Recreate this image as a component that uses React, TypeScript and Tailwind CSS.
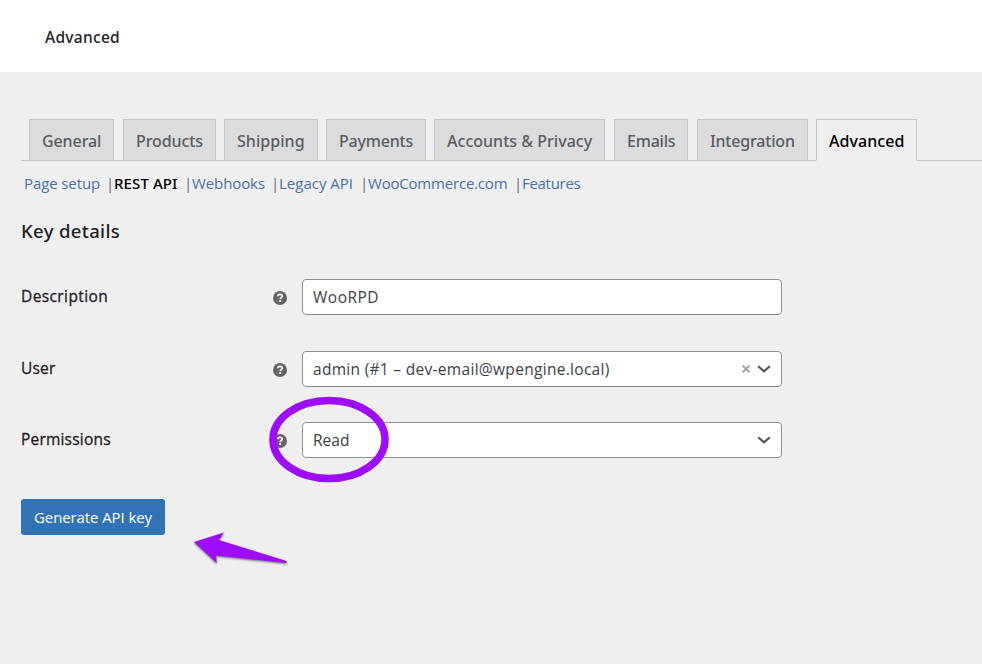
import React from 'react';

const tabs = [
  { label: 'General', box: 'w-[85px] mr-[9px]', text: 'tracking-[-0.1px]' },
  { label: 'Products', box: 'w-[93px] mr-[8px]', text: 'tracking-[-0.1px]' },
  { label: 'Shipping', box: 'w-[94px] mr-[8px]', text: 'tracking-[0.05px]' },
  { label: 'Payments', box: 'w-[100px] mr-[8px]', text: 'tracking-[-0.2px]' },
  { label: 'Accounts & Privacy', box: 'w-[171px] mr-[9px]', text: 'tracking-[0.02px]' },
  { label: 'Emails', box: 'w-[74px] mr-[9px]', text: 'tracking-[-0.2px]' },
  { label: 'Integration', box: 'w-[111px] mr-[8px]', text: 'tracking-[-0.18px]' },
  { label: 'Advanced', box: 'w-[101px]', text: 'tracking-[0.05px]', active: true },
];

const sections = [
  { label: 'Page setup', box: 'w-[82px]', text: 'tracking-[-0.1px]' },
  { label: 'REST API', box: 'w-[70px]', text: 'tracking-[0.1px]', active: true },
  { label: 'Webhooks', box: 'w-[79px]', text: 'tracking-[-0.1px]' },
  { label: 'Legacy API', box: 'w-[81px]', text: 'tracking-[0px]' },
  { label: 'WooCommerce.com', box: 'w-[146px]', text: 'tracking-[-0.2px]' },
  { label: 'Features', box: 'w-[60px]', text: 'tracking-[-0.3px]' },
];

function Help() {
  return (
    <svg className="h-[14px] w-[14px] shrink-0" viewBox="0 0 14 14" fill="none">
      <circle cx="7" cy="7" r="7" fill="#646467" />
      <path d="M4.9 5.3C4.9 4 5.8 3.4 7 3.4s2.2.7 2.2 1.8c0 1.5-2 1.5-2 3.1" stroke="#f4f4f4" strokeWidth="1.7" />
      <path d="M6.2 9.2h1.9V11H6.2z" fill="#f4f4f4" />
    </svg>
  );
}

function Chevron() {
  return (
    <svg className="mb-px h-[8px] w-[14px] shrink-0" viewBox="0 0 14 8" fill="none">
      <path d="M1.2 1.2L7 6.4l5.8-5.2" stroke="#505256" strokeWidth="2.1" />
    </svg>
  );
}

function Row({ label, track, children }: { label: string; track: string; children: React.ReactNode }) {
  return (
    <div className="flex h-9 items-center">
      <div className={`w-[252px] shrink-0 pb-[2px] text-[15.5px] leading-6 text-[#1f2125] [-webkit-text-stroke:0.3px_#1f2125] ${track}`}>{label}</div>
      <div className="mt-[2px]">
        <Help />
      </div>
      <div className="ml-[15px] flex h-9 w-[480px] items-center rounded-[4px] border border-[#8c8f94] bg-white pl-[10px] pr-[10px] pt-px text-[15.5px] text-[#3c4046]">
        {children}
      </div>
    </div>
  );
}

export default function App() {
  return (
    <div className="relative h-[664px] w-[982px] overflow-hidden whitespace-nowrap bg-[#efefef] font-['Open_Sans','Noto_Sans',sans-serif]">
      <header className="flex h-[72px] items-center bg-white pl-[45px] pt-[2px]">
        <h1 className="font-['Noto_Sans'] text-[15.5px] font-medium leading-6 tracking-[0.3px] text-[#1d2025]">Advanced</h1>
      </header>

      <nav className="ml-[21px] mt-[47px] flex h-[42px] border-b border-[#c3c4c7] pl-[8px]">
        {tabs.map((t) => (
          <div
            key={t.label}
            className={`flex h-[42px] shrink-0 border border-[#c3c4c7] pl-[12px] pt-[9px] font-['Noto_Sans'] text-[16px] font-medium leading-6 ${t.box} ${
              t.active ? 'border-b-[#efefef] bg-[#efefef] text-black' : 'bg-[#dcdcde] text-[#595c61]'
            }`}
          >
            <span className={t.text}>{t.label}</span>
          </div>
        ))}
      </nav>

      <ul className="ml-[24px] mt-[10px] flex h-6 text-[15px] leading-6">
        {sections.map((s, i) => (
          <li key={s.label} className="flex">
            <span className={`${s.box} ${s.text} ${s.active ? "font-['Noto_Sans'] font-medium text-black" : 'text-[#4a72a8]'}`}>{s.label}</span>
            {i < sections.length - 1 && <span className="w-[8px] text-[#646970]">|</span>}
          </li>
        ))}
      </ul>

      <main className="pl-[21px] pt-[24px]">
        <h2 className="font-['Noto_Sans'] text-[18.5px] font-medium leading-6 tracking-[0.35px] text-[#1f2125]">Key details</h2>

        <div className="mt-[36px]">
          <Row label="Description" track="tracking-[0.4px]">
            <span className="tracking-[0.5px]">WooRPD</span>
          </Row>
          <div className="h-9" />
          <Row label="User" track="tracking-[0.2px]">
            <span className="grow tracking-[0.3px]">admin (#1 – dev-email@wpengine.local)</span>
            <svg className="mb-px mr-[7px] h-[8px] w-[8px]" viewBox="0 0 8 8" fill="none">
              <path d="M.6.6l6.8 6.8M7.4.6L.6 7.4" stroke="#999" strokeWidth="1.7" />
            </svg>
            <Chevron />
          </Row>
          <div className="h-[35px]" />
          <Row label="Permissions" track="tracking-[0.2px]">
            <span className="grow tracking-[0px]">Read</span>
            <Chevron />
          </Row>
        </div>

        <button className="mt-[41px] block h-9 w-[144px] rounded-[3px] bg-[#3273b5] pl-[13px] text-left text-[15px] leading-9 tracking-[-0.1px] text-white">
          Generate API key
        </button>
      </main>

      <svg className="absolute left-[260px] top-[390px] h-[100px] w-[140px]" viewBox="260 390 140 100" fill="none">
        <ellipse cx="329" cy="439.5" rx="56" ry="39" stroke="#9d0cfb" strokeWidth="7.6" />
      </svg>
      <svg className="absolute left-[185px] top-[525px] h-[50px] w-[110px] drop-shadow-[0_1px_1px_rgba(0,0,0,0.6)]" viewBox="185 525 110 50">
        <path d="M194 542l30-9.5-5.3 7.4L286.5 561v2L216 555.5l.7 7.5z" fill="#9d0cfb" />
      </svg>
    </div>
  );
}
